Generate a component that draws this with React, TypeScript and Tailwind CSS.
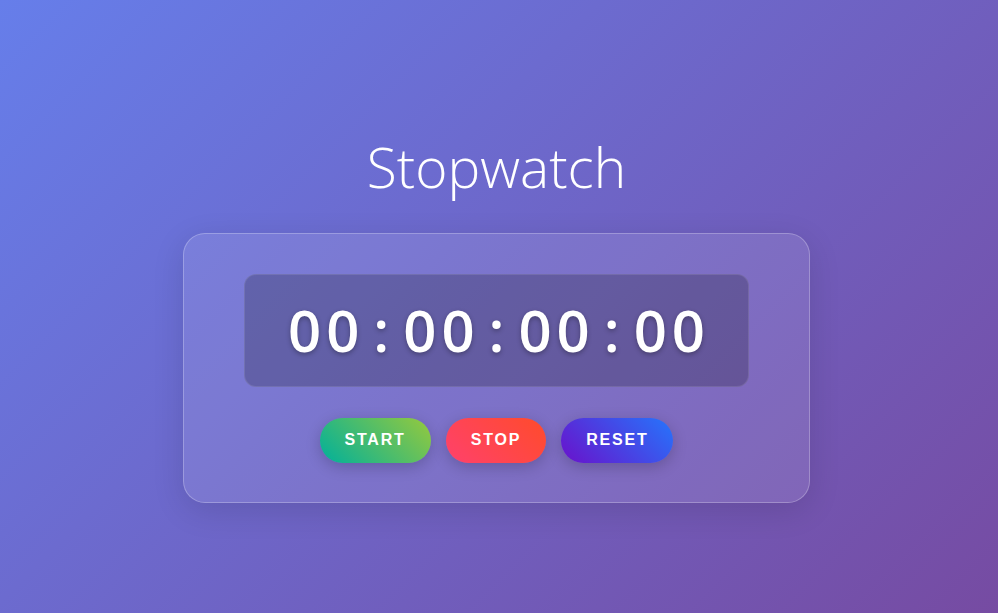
import React from 'react';

const Digits: React.FC<{ value: string }> = ({ value }) => (
  <span className="tracking-[5px] mr-[-5px]">{value}</span>
);

const Colon: React.FC = () => <span className="mx-[14px]">:</span>;

export default function App() {
  const buttons = [
    { label: 'START', cls: 'bg-[linear-gradient(45deg,#00b09b,#96c93d)]' },
    { label: 'STOP', cls: 'bg-[linear-gradient(45deg,#ff416c,#ff4b2b)]' },
    { label: 'RESET', cls: 'bg-[linear-gradient(45deg,#6a11cb,#2575fc)]' },
  ];

  return (
    <div className="min-h-screen h-[613px] pt-[18px] pr-[5px] flex flex-col items-center justify-center bg-[linear-gradient(135deg,#667eea_0%,#764ba2_100%)] text-white">
      <h1 className="font-['Open_Sans',sans-serif] font-light text-[55px] leading-[76px] mb-[28px]">
        Stopwatch
      </h1>

      {/* Glass card */}
      <div className="bg-white/10 border border-white/25 rounded-[22px] px-[60px] pt-[40px] pb-[39px] shadow-[0_8px_32px_rgba(0,0,0,0.12)] flex flex-col items-center">
        <div className="w-[505px] h-[113px] flex items-center justify-center rounded-[12px] bg-black/20 border border-white/10 font-['Open_Sans',sans-serif] font-semibold text-[58px] leading-none [text-shadow:0_2px_5px_rgba(0,0,0,0.3)]">
          <Digits value="00" />
          <Colon />
          <Digits value="00" />
          <Colon />
          <Digits value="00" />
          <Colon />
          <Digits value="00" />
        </div>

        <div className="flex gap-[15px] mt-[31px]">
          {buttons.map((b) => (
            <button
              key={b.label}
              className={`${b.cls} h-[45px] px-[25px] rounded-full font-['Liberation_Sans',Arial,sans-serif] font-bold text-[16px] tracking-[1.8px] text-white shadow-[0_4px_15px_rgba(0,0,0,0.2)]`}
            >
              {b.label}
            </button>
          ))}
        </div>
      </div>
    </div>
  );
}
